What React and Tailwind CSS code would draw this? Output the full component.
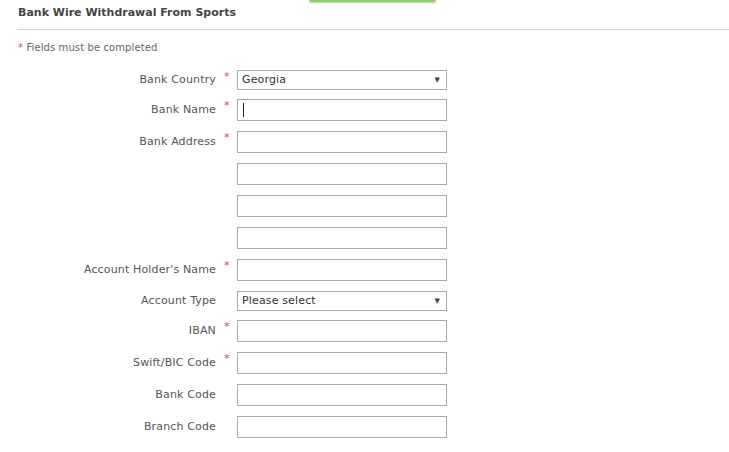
import React from 'react'

const fields = [
  { label: 'Bank Country', required: true, type: 'select', value: 'Georgia' },
  { label: 'Bank Name', required: true, type: 'input', caret: true },
  { label: 'Bank Address', required: true, type: 'input' },
  { label: '', type: 'input' },
  { label: '', type: 'input' },
  { label: '', type: 'input' },
  { label: "Account Holder's Name", required: true, type: 'input' },
  { label: 'Account Type', type: 'select', value: 'Please select' },
  { label: 'IBAN', required: true, type: 'input' },
  { label: 'Swift/BIC Code', required: true, type: 'input' },
  { label: 'Bank Code', type: 'input' },
  { label: 'Branch Code', type: 'input' },
]

export default function App() {
  return (
    <div className="relative h-[452px] w-[729px] overflow-hidden bg-white font-['DejaVu_Sans',Verdana,sans-serif] text-[#555]">
      {/* bottom edge of a button cut off at the top */}
      <div className="absolute top-0 left-[309px] h-[2px] w-[127px] rounded-b-[2px] bg-[#8cca6c] shadow-[0_1px_2px_rgba(0,0,0,0.25)]" />

      <h2 className="pt-[6px] pl-[18px] text-[11px] leading-[14px] font-bold text-[#444]">
        Bank Wire Withdrawal From Sports
      </h2>
      <div className="mt-[9px] ml-[17px] border-t border-[#d4d4d4]" />

      <p className="mt-[12px] pl-[18px] text-[10px] leading-[12px] tracking-[0.1px] text-[#666]">
        <span className="text-[#d0457a]">*</span> Fields must be completed
      </p>

      <div className="mt-[16px] flex flex-col">
        {fields.map((f, i) => (
          <FormRow key={i} {...f} />
        ))}
      </div>
    </div>
  )
}

function FormRow({ label, required, type, value, caret }) {
  const isSelect = type === 'select'
  const h = isSelect ? 'h-[20px]' : 'h-[22px]'

  return (
    <div className={`flex items-start ${isSelect ? 'h-[29px]' : 'h-[32px]'}`}>
      <div
        className={`flex w-[216px] shrink-0 items-center justify-end pt-[1px] text-[11px] tracking-[0.15px] text-[#555] ${h}`}
      >
        {label}
      </div>
      <div className="w-[21px] shrink-0 pt-[1px] pl-[8px] text-[11px] leading-[12px] text-[#d0457a]">
        {required ? '*' : ''}
      </div>
      {isSelect ? (
        <div className="flex h-[20px] w-[210px] items-center justify-between border border-[#a9a9a9] bg-white pr-[6px] pl-[4px] text-[11px] tracking-[0.15px] text-[#333]">
          <span>{value}</span>
          <span className="text-[7px] text-[#444]">▼</span>
        </div>
      ) : (
        <div className="flex h-[22px] w-[210px] items-center border border-[#a9a9a9] bg-white pl-[5px]">
          {caret && <span className="h-[14px] w-px bg-[#222]" />}
        </div>
      )}
    </div>
  )
}
